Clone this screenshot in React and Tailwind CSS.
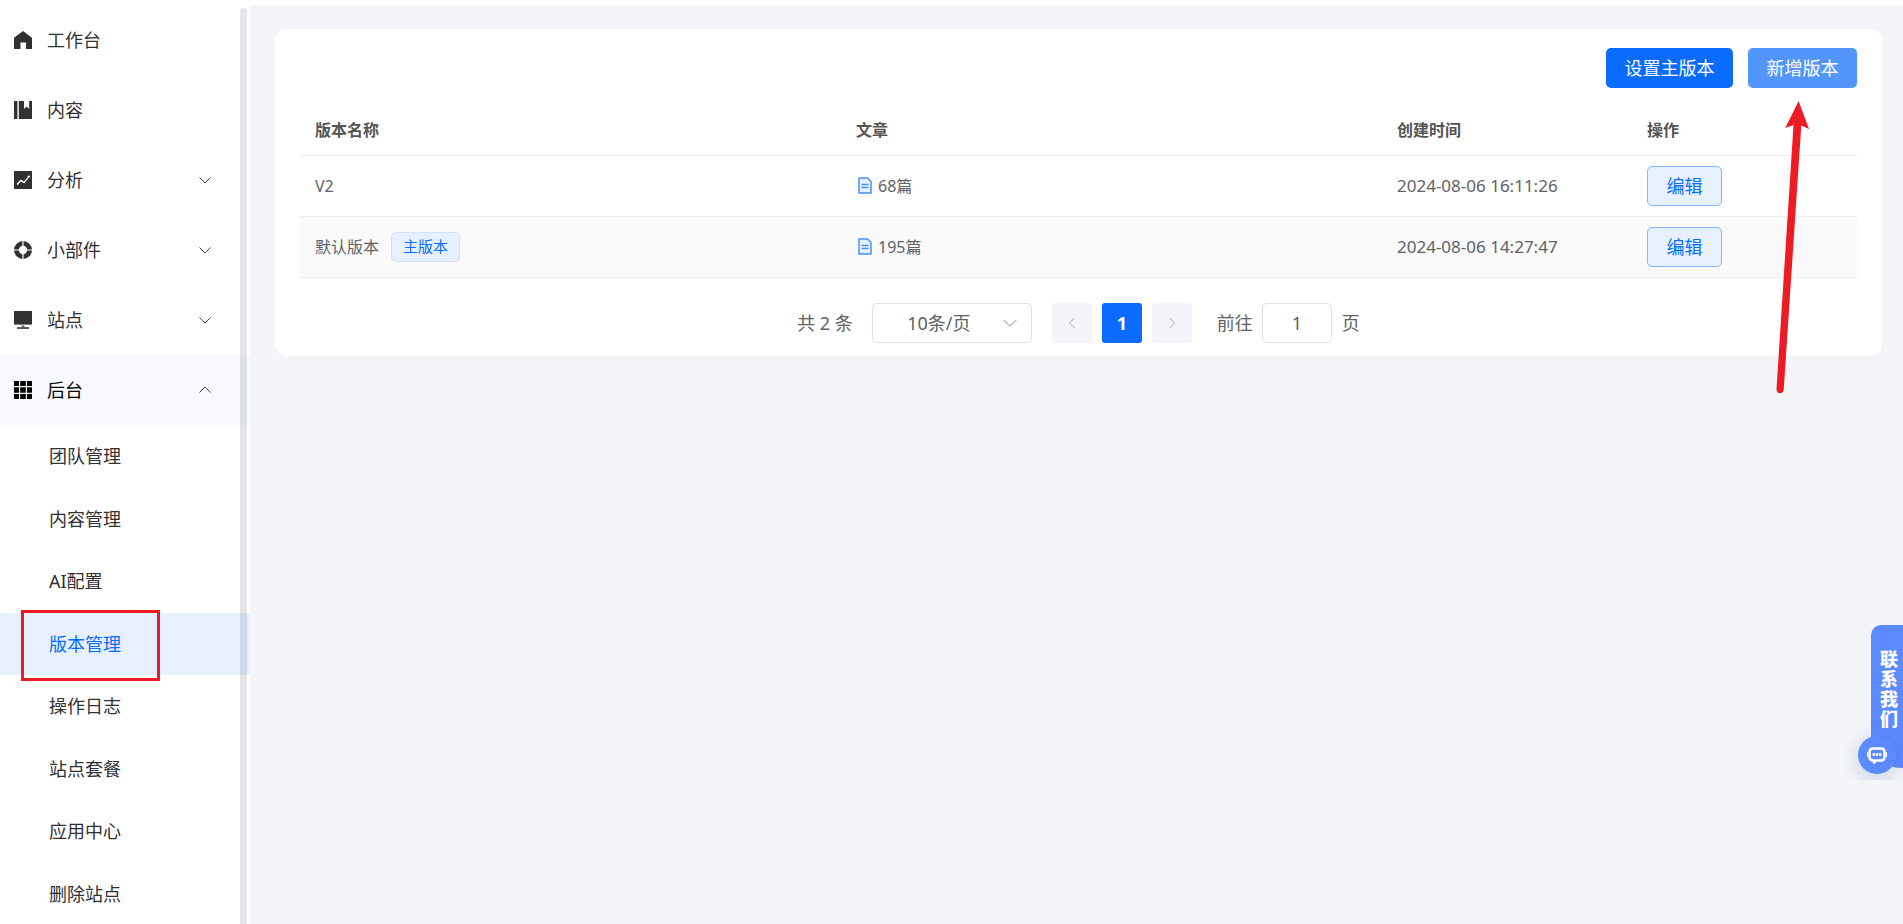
import React from 'react';

const HomeIcon = () => (
    <svg width="18" height="18" viewBox="0 0 18 18" fill="currentColor" aria-hidden="true">
        <path d="M9 0L18 6.8V18H12V11.5H6.5V18H0V6.8Z" />
    </svg>
);

const BookIcon = () => (
    <svg width="18" height="18" viewBox="0 0 18 18" fill="currentColor" aria-hidden="true">
        <path d="M0 0H3.4V18H0ZM4.8 0H10V8L12.6 5.4L15.2 8V0H18V18H4.8Z" />
    </svg>
);

const ChartIcon = () => (
    <svg width="18" height="18" viewBox="0 0 18 18" aria-hidden="true">
        <path fill="currentColor" d="M0 0H18V18H0Z" />
        <path d="M3.4 13L7 9.4L10 11.6L14 6.6" fill="none" stroke="#fff" strokeWidth="1.4" />
        <circle cx="14.8" cy="5.6" r="1.2" fill="#fff" />
        <circle cx="3.6" cy="12.8" r="0.9" fill="#fff" />
    </svg>
);

const WidgetIcon = () => (
    <svg width="18" height="18" viewBox="0 0 18 18" aria-hidden="true">
        <circle cx="9" cy="9" r="6.6" fill="none" stroke="currentColor" strokeWidth="4.8" />
        <path d="M9 0V18M0 9H18" stroke="#fff" strokeWidth="1.2" />
    </svg>
);

const SiteIcon = () => (
    <svg width="18" height="18" viewBox="0 0 18 18" fill="currentColor" aria-hidden="true">
        <path d="M0 0H18V13.6H0Z" />
        <path d="M7.6 14.6H10.4V16H15V18H3V16H7.6Z" opacity="0.8" />
    </svg>
);

const GridIcon = () => (
    <svg width="18" height="18" viewBox="0 0 18 18" fill="currentColor" aria-hidden="true">
        <path d="M0 0H5V5H0ZM6.2 0H11.8V5H6.2ZM13 0H18V5H13ZM0 6.2H5V11.8H0ZM6.2 6.2H11.8V11.8H6.2ZM13 6.2H18V11.8H13ZM0 13H5V18H0ZM6.2 13H11.8V18H6.2ZM13 13H18V18H13Z" />
    </svg>
);

const Chevron = ({ d, size = 12, className }) => (
    <svg width={size} height={size} viewBox="0 0 12 12" fill="none" stroke="currentColor" className={className} aria-hidden="true">
        <path d={d} />
    </svg>
);

const DocIcon = () => (
    <svg width="14" height="17" viewBox="0 0 14 17" fill="none" aria-hidden="true">
        <path d="M1 1H9.5L13 4.5V16H1Z" fill="#e6f0ff" stroke="#4a90fb" strokeWidth="1.5" strokeLinejoin="round" />
        <path d="M3.5 7.5H10.5M3.5 10.5H10.5" stroke="#4a90fb" strokeWidth="1.3" />
    </svg>
);

const menuItems = [
    { title: '工作台', icon: <HomeIcon /> },
    { title: '内容', icon: <BookIcon /> },
    { title: '分析', icon: <ChartIcon />, expandable: true },
    { title: '小部件', icon: <WidgetIcon />, expandable: true },
    { title: '站点', icon: <SiteIcon />, expandable: true },
    { title: '后台', icon: <GridIcon />, expandable: true, open: true },
];

const subItems = ['团队管理', '内容管理', 'AI配置', '版本管理', '操作日志', '站点套餐', '应用中心', '删除站点'];

const versions = [
    { name: 'V2', count: 68, created: '2024-08-06 16:11:26' },
    { name: '默认版本', main: true, count: 195, created: '2024-08-06 14:27:47' },
];

const Sidebar = () => (
    <aside className="relative w-[250px] shrink-0 bg-white pt-[5px] text-[#303133]">
        <nav>
            {menuItems.map((item) => (
                <button
                    key={item.title}
                    type="button"
                    aria-expanded={item.expandable ? Boolean(item.open) : undefined}
                    className={`flex h-[70px] w-full items-center pl-[14px] pr-[39px] ${item.open ? 'bg-[#f8f9ff] text-black' : ''}`}
                >
                    {item.icon}
                    <span className="ml-[15px]">{item.title}</span>
                    {item.expandable && (
                        <Chevron
                            d={item.open ? 'M0.5 8.5L6 3L11.5 8.5' : 'M0.5 3.5L6 9L11.5 3.5'}
                            className="ml-auto text-[#444]"
                        />
                    )}
                </button>
            ))}
            <div className="flex h-[500px] flex-col">
                {subItems.map((title) => (
                    <a
                        key={title}
                        href="#"
                        className={`relative flex flex-1 items-center pl-[49px] ${title === '版本管理' ? 'bg-[#e6f0ff] text-[#0a6cff]' : ''}`}
                    >
                        {title}
                        {title === '版本管理' && (
                            <span className="absolute -top-[3px] left-[21px] h-[71px] w-[139px] border-3 border-[#ed1c24]" />
                        )}
                    </a>
                ))}
            </div>
        </nav>
        <div className="absolute top-2 right-[3px] bottom-0 w-[7px] rounded-t-full bg-[#909399]/24" />
    </aside>
);

const VersionTable = () => (
    <table className="mt-[17px] w-full table-fixed border-collapse text-left text-base text-[#606266]">
        <colgroup>
            <col />
            <col />
            <col className="w-[250px]" />
            <col className="w-[225px]" />
        </colgroup>
        <thead>
            <tr className="h-[50px] border-b border-[#ebeef5] text-[#555]">
                <th className="px-[15px] font-bold">版本名称</th>
                <th className="px-[15px] font-bold">文章</th>
                <th className="px-[15px] font-bold">创建时间</th>
                <th className="px-[15px] font-bold">操作</th>
            </tr>
        </thead>
        <tbody>
            {versions.map((row) => (
                <tr key={row.name} className="h-[61px] border-b border-[#ebeef5] even:bg-[#fafafa]">
                    <td className="px-[15px]">
                        <div className="flex items-center">
                            {row.name}
                            {row.main && (
                                <span className="ml-3 flex h-[30px] items-center rounded-[5px] border border-[#cee2ff] bg-[#e6f0ff] px-[11px] text-[15px] text-[#0a6cff]">
                                    主版本
                                </span>
                            )}
                        </div>
                    </td>
                    <td className="px-[15px]">
                        <div className="flex items-center gap-[6px] pl-[2px]">
                            <DocIcon />
                            {row.count}篇
                        </div>
                    </td>
                    <td className="px-[15px] text-[17px]">{row.created}</td>
                    <td className="px-[15px]">
                        <button type="button" className="h-10 w-[75px] rounded-[5px] border border-[#85b5ff] bg-[#e6f0ff] text-lg text-[#0a6cff]">
                            编辑
                        </button>
                    </td>
                </tr>
            ))}
        </tbody>
    </table>
);

const Pagination = () => (
    <div className="mt-[25px] flex items-center justify-center text-[#606266]">
        <span>共 2 条</span>
        <div className="relative ml-[19px]">
            <select
                aria-label="每页条数"
                className="h-10 w-40 appearance-none rounded-[5px] border border-[#dcdfe6] bg-white pr-[26px] text-center outline-none"
            >
                <option>10条/页</option>
            </select>
            <Chevron d="M0.5 3.5L6 8.5L11.5 3.5" size={14} className="pointer-events-none absolute top-[13px] right-[15px] text-[#b0b3ba]" />
        </div>
        <button type="button" aria-label="上一页" className="ml-5 flex size-10 items-center justify-center rounded-[3px] bg-[#f4f5fa] text-[#a8abb2]">
            <Chevron d="M8.5 1L3.5 6L8.5 11" />
        </button>
        <button type="button" className="ml-[10px] size-10 rounded-[3px] bg-[#0a6cff] font-bold text-white">1</button>
        <button type="button" aria-label="下一页" className="ml-[10px] flex size-10 items-center justify-center rounded-[3px] bg-[#f4f5fa] text-[#a8abb2]">
            <Chevron d="M3.5 1L8.5 6L3.5 11" />
        </button>
        <label className="ml-[25px] flex items-center">
            前往
            <input
                type="text"
                defaultValue="1"
                className="mr-[10px] ml-[9px] h-10 w-[70px] rounded-[5px] border border-[#dcdfe6] text-center outline-none"
            />
            页
        </label>
    </div>
);

const ContactWidget = () => (
    <div className="absolute top-[625px] right-0 h-[155px] w-[58px] overflow-hidden">
        <button
            type="button"
            className="ml-auto flex h-[143px] w-8 justify-center rounded-tl-[10px] rounded-bl-[30px] bg-[#5b8aff] pt-6 pl-1 font-black text-white"
        >
            <span className="w-[18px] text-lg leading-5 break-all">联系我们</span>
        </button>
        <span className="absolute bottom-[6px] left-[13px] flex size-[38px] items-center justify-center rounded-full bg-[#5b8aff] shadow-[0_4px_20px_rgba(60,80,140,0.25)]">
            <svg width="20" height="17" viewBox="0 0 20 17" fill="none" aria-hidden="true">
                <path d="M6 1.5H14Q17.5 1.5 17.5 5V10Q17.5 13.5 14 13.5H9L7 15.5V13.5H6Q2.5 13.5 2.5 10V5Q2.5 1.5 6 1.5Z" stroke="#fff" strokeWidth="2.6" strokeLinejoin="round" />
                <path d="M0.5 5V10M19.5 5V10" stroke="#fff" strokeWidth="1" />
                <path d="M5.5 7.5H8M8.7 7.5H11.3M12 7.5H14.5" stroke="#fff" strokeWidth="2.4" />
            </svg>
        </span>
    </div>
);

const GuideArrow = () => (
    <svg className="pointer-events-none absolute top-[100px] right-[90px]" width="40" height="296" viewBox="0 0 40 296" aria-hidden="true">
        <path d="M25.6 1L36 29L28.3 25.5L10.7 290Q10 293.3 7 293.3Q3.5 293 3.5 289L20.5 25L12.3 28Z" fill="#ed1c24" />
    </svg>
);

const App = () => (
    <div className="relative flex h-screen overflow-hidden bg-white font-['Noto_Sans','Noto_Sans_CJK_SC',sans-serif] text-lg">
        <Sidebar />
        <main className="mt-[5px] flex-1 bg-[#f3f5f9] pt-6 pr-[21px] pl-[25px]">
            <section className="rounded-xl bg-white px-[25px] pt-[19px] pb-[13px]">
                <div className="flex justify-end gap-[15px] text-white">
                    <button type="button" className="h-10 w-[127px] rounded-[5px] bg-[#0a6cff]">设置主版本</button>
                    <button type="button" className="h-10 w-[109px] rounded-[5px] bg-[#5296fb]">新增版本</button>
                </div>
                <VersionTable />
                <Pagination />
            </section>
        </main>
        <ContactWidget />
        <GuideArrow />
    </div>
);

export default App;
